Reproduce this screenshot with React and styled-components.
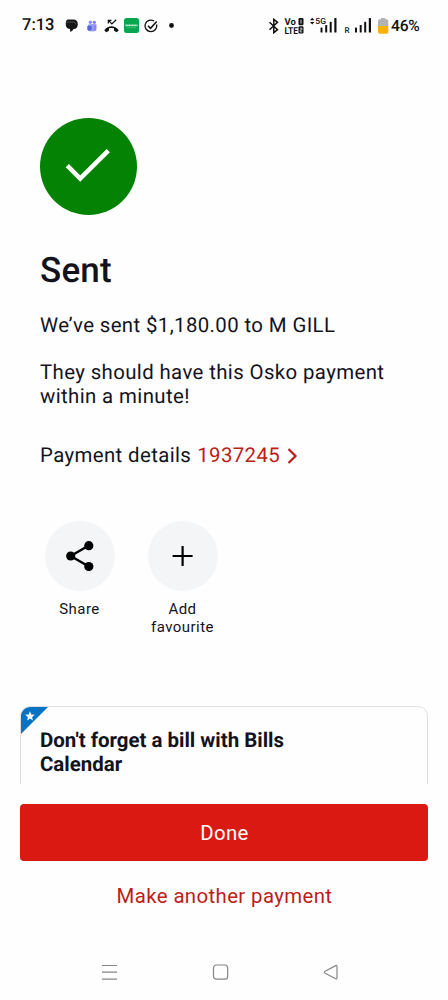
import React from 'react'
import styled, { createGlobalStyle } from 'styled-components'

const GlobalStyle = createGlobalStyle`
  * {
    box-sizing: border-box;
  }

  body {
    margin: 0;
    background: #fefefe;
    color: #13131d;
    font-family: Roboto, 'Liberation Sans', sans-serif;
    text-rendering: geometricPrecision;
  }

  button {
    border: 0;
    padding: 0;
    background: none;
    color: inherit;
    font: inherit;
  }

  svg {
    display: block;
    flex: none;
  }
`

const Screen = styled.div`
  display: flex;
  flex-direction: column;
  width: 448px;
  height: 1000px;
  overflow: hidden;
`

const StatusBar = styled.header`
  display: flex;
  justify-content: space-between;
  height: 51px;
  padding: 0 28px 0 22px;
  color: #111;
`

const StatusGroup = styled.div`
  display: flex;
  align-items: center;
`

const StatusItem = styled.div`
  flex: none;
  width: ${props => props.$width}px;
  margin-left: ${props => props.$gap || 0}px;
`

const Clock = styled.span`
  width: 33px;
  padding-top: 1px;
  font-size: 16.5px;
  font-weight: 500;
  line-height: 20px;
  white-space: nowrap;
`

const Battery = styled.span`
  width: 29px;
  margin-left: 2px;
  font-size: 15.6px;
  font-weight: 500;
  line-height: 20px;
  letter-spacing: -0.2px;
  white-space: nowrap;
`

const SvgLabel = styled.text`
  font-family: Roboto, sans-serif;
  font-size: ${props => props.$size}px;
  font-weight: ${props => props.$weight || 700};
`

const Content = styled.main`
  height: 733px;
  padding: 66px 20px 0;
  overflow: hidden;
`

const Message = styled.section`
  padding: 0 20px;
`

const SuccessBadge = styled.div`
  display: flex;
  align-items: center;
  justify-content: center;
  width: 97px;
  height: 97px;
  margin-top: 0.5px;
  padding: 0 2px 2px 0;
  border-radius: 50%;
  background: #038203;
`

const Title = styled.h1`
  margin: 35px 0 0;
  font-size: 35px;
  font-weight: 500;
  line-height: 42px;
  letter-spacing: 0.2px;
`

const Text = styled.p`
  margin: ${props => props.$top}px 0 0;
  font-size: 20.4px;
  line-height: 23.8px;
  letter-spacing: 0.38px;
  white-space: nowrap;
`

const DetailsRow = styled(Text)`
  display: flex;
  align-items: center;
`

const DetailsLink = styled.a`
  display: flex;
  align-items: center;
  gap: 7px;
  margin-left: 6px;
  color: #bd1d17;
`

const Actions = styled.div`
  display: flex;
  gap: 14px;
  height: 184.3px;
  margin-top: 53.5px;
  padding-left: 15px;
`

const Action = styled.button`
  display: flex;
  flex-direction: column;
  align-items: center;
  width: 89px;
  font-size: 15px;
  line-height: 17.5px;
  letter-spacing: 0.45px;
`

const ActionCircle = styled.span`
  display: flex;
  align-items: center;
  justify-content: center;
  width: 70px;
  height: 70px;
  margin-bottom: 10px;
  border-radius: 50%;
  background: #f3f5f7;
`

const PromoCard = styled.article`
  position: relative;
  height: 120px;
  padding: 21px 19px;
  border: 1px solid #e0e0e1;
  border-radius: 10px;
  overflow: hidden;
`

const PromoTitle = styled.h2`
  width: 280px;
  margin: 0;
  font-size: 20.45px;
  font-weight: 700;
  line-height: 24px;
`

const Ribbon = styled.svg`
  position: absolute;
  top: -1px;
  left: -1px;
`

const Footer = styled.footer`
  display: flex;
  flex-direction: column;
  align-items: center;
  padding: 20px 20px 0;
`

const DoneButton = styled.button`
  width: 100%;
  height: 57px;
  padding: 1px 0 0 1px;
  border-radius: 4px;
  background: #da1912;
  color: #fff;
  font-size: 20.4px;
  letter-spacing: 0.38px;
`

const TextButton = styled.button`
  margin-top: 23px;
  padding-left: 1px;
  color: #bd1d17;
  font-size: 20.4px;
  line-height: 24px;
  letter-spacing: 0.38px;
`

const SystemNav = styled.nav`
  display: flex;
  justify-content: space-between;
  margin-top: 56px;
  padding: 0 109px 0 101px;
`

const ChatIcon = () => (
  <svg width="13" height="13" viewBox="0 0 13 13" fill="#161616">
    <path d="M3.500.5h4.800Q12.800.5 12.800 5.200q0 4.600-4.300 4.800-.7 2-3 2.800-.5.200-.4-.4V10Q1.500 10 .8 6.200.2.500 3.500.5z" />
    <path d="M1.300 3.800q.7-.8 2-.8h5q2 0 2.700 2.500" fill="none" stroke="#6f6f6f" strokeWidth=".6" />
  </svg>
)

const TeamsIcon = () => (
  <svg width="10" height="12" viewBox="0 0 10 12">
    <circle cx="3.400" cy="2.300" r="1.700" fill="#8f8ff0" />
    <circle cx="7.400" cy="2.300" r="1.600" fill="#8378e2" />
    <path d="M4.500 4.300h5v4.200q0 2.700-2.500 2.700H5z" fill="#9a7cf0" />
    <rect x="1" y="4.300" width="6" height="6.900" rx="1.300" fill="#8ba3f6" />
    <rect x=".3" y="5.800" width="4.400" height="4.600" rx=".8" fill="#5c63d2" />
  </svg>
)

const MissedCallIcon = () => (
  <svg width="15" height="14" viewBox="0 0 15 14">
    <path d="M4.300 4.500V1.300h3.200M4.600 1.500l3.300 3.400L12.200.8" fill="none" stroke="#111" strokeWidth="1.200" />
    <path
      d="M.5 10.900Q3.400 7.300 7.500 7.300t7 3.600q.3.400 0 .7l-1.400 1.400q-.4.400-.8.100l-1.900-1.200q-.4-.3-.4-.7V9.300q-2.500-.7-5 0v1.900q0 .4-.4.700l-1.900 1.200q-.4.300-.8-.1L.5 11.600q-.3-.3 0-.7z"
      fill="#111"
    />
  </svg>
)

const BankAppIcon = () => (
  <svg width="15" height="15" viewBox="0 0 15 15">
    <rect width="15" height="15" rx="2.500" fill="#06a650" />
    <path d="M1.500 7.400h12" stroke="#c4f1d7" strokeWidth="1.900" strokeDasharray="1.300 .3" />
    <path d="M3 9.800h9" stroke="#58c588" strokeWidth=".6" />
  </svg>
)

const TaskIcon = () => (
  <svg width="14" height="14" viewBox="0 0 14 14" fill="none" stroke="#111" strokeWidth="1.300">
    <path d="M12.500 5.500A5.800 5.800 0 1 1 10 2" />
    <path d="M4 6.700l2.500 2.600 6.200-6.900" strokeWidth="1.500" />
  </svg>
)

const BluetoothIcon = () => (
  <svg width="11" height="16" viewBox="0 0 11 16" fill="none" stroke="#111" strokeWidth="1.500">
    <path d="M1.500 4.300l8 7.400-3.700 3V1.300l3.700 3-8 7.400" />
  </svg>
)

const VolteIcon = () => (
  <svg width="20" height="18" viewBox="0 0 20 18" fill="#111">
    <SvgLabel x="0.500" y="8" $size="9.500">Vo</SvgLabel>
    <SvgLabel x="0.500" y="16.500" $size="9.500" textLength="13.500" lengthAdjust="spacingAndGlyphs">LTE</SvgLabel>
    <rect x="14.500" y="1" width="5" height="7.200" rx="1.200" />
    <path d="M17 2.600v4" stroke="#fff" strokeWidth=".8" />
    <rect x="14.500" y="9.300" width="5" height="7.200" rx="1.200" />
    <path d="M15.900 11.200h2v1.700h-1.700v2h2" fill="none" stroke="#fff" strokeWidth=".7" />
  </svg>
)

const SignalBars = ({ x }) => (
  <g fill="#111">
    <rect x={x} y="10.500" width="2" height="5" rx=".6" />
    <rect x={x + 4.700} y="8" width="2" height="7.500" rx=".6" />
    <rect x={x + 9.200} y="4.800" width="2" height="10.700" rx=".6" />
    <rect x={x + 13.800} y="1" width="2.200" height="14.500" rx=".6" />
  </g>
)

const FiveGSignal = () => (
  <svg width="27" height="17" viewBox="0 0 27 17" fill="#111">
    <path d="M0 3.300L2.200.8l2.200 2.500zM0 4.900h4.400L2.200 7.400z" />
    <SvgLabel x="5.300" y="7.300" $size="8.500" $weight={500}>5G</SvgLabel>
    <SignalBars x={10.500} />
  </svg>
)

const RoamingSignal = () => (
  <svg width="27" height="17" viewBox="0 0 27 17" fill="#111">
    <SvgLabel x="0.500" y="15.500" $size="8" $weight={500}>R</SvgLabel>
    <SignalBars x={11} />
  </svg>
)

const BatteryIcon = () => (
  <svg width="12" height="16" viewBox="0 0 12 16">
    <path d="M4 0h4.300v1.300h1.300q1.700 0 1.700 1.700v5H1V3q0-1.700 1.700-1.700H4z" fill="#b3b3b5" />
    <path d="M1 8h10.300v6q0 1.700-1.700 1.700H2.700Q1 15.700 1 14z" fill="#fbb003" />
  </svg>
)

const CheckIcon = () => (
  <svg width="45" height="37" viewBox="0 0 45 37" fill="none" stroke="#fff" strokeWidth="4.500">
    <path d="M2.300 18.700L15.200 31.600 43.300 3.600" />
  </svg>
)

const ChevronIcon = () => (
  <svg width="11" height="16" viewBox="0 0 11 16" fill="none" stroke="#bd1d17" strokeWidth="2.200">
    <path d="M1.500 1l7 7-7 7" />
  </svg>
)

const ShareIcon = () => (
  <svg width="28" height="30" viewBox="0 0 28 30">
    <path d="M22.800 4.500L4.700 15l18.100 10.500" fill="none" stroke="#000" strokeWidth="2.400" />
    <circle cx="4.700" cy="15" r="4.600" />
    <circle cx="22.800" cy="4.700" r="4.600" />
    <circle cx="22.800" cy="25.500" r="4.600" />
  </svg>
)

const PlusIcon = () => (
  <svg width="22" height="22" viewBox="0 0 22 22" stroke="#000" strokeWidth="2.200">
    <path d="M10.600 1v20M.6 11h20" />
  </svg>
)

const RecentsIcon = () => (
  <svg width="17" height="17" viewBox="0 0 17 17" stroke="#858585" strokeWidth="1.200">
    <path d="M1 1.500h15M1 8.200h15M1 15.200h15" />
  </svg>
)

const HomeIcon = () => (
  <svg width="17" height="17" viewBox="0 0 17 17" fill="none" stroke="#858585" strokeWidth="1.200">
    <rect x="1.500" y="1" width="14.200" height="14.200" rx="3" />
  </svg>
)

const BackIcon = () => (
  <svg width="17" height="17" viewBox="0 0 17 17" fill="none" stroke="#858585" strokeWidth="1.200">
    <path d="M3.100 7.200L13.700 1.600q1.300-.6 1.300.7v11.800q0 1.300-1.300.7L3.100 9.200q-1.700-1 0-2z" />
  </svg>
)

const PhoneStatus = () => (
  <StatusBar>
    <StatusGroup>
      <Clock>7:13</Clock>
      <StatusItem $width={13} $gap={10}><ChatIcon /></StatusItem>
      <StatusItem $width={10} $gap={9}><TeamsIcon /></StatusItem>
      <StatusItem $width={15} $gap={7}><MissedCallIcon /></StatusItem>
      <StatusItem $width={15} $gap={5}><BankAppIcon /></StatusItem>
      <StatusItem $width={14} $gap={5}><TaskIcon /></StatusItem>
      <StatusItem $width={5} $gap={10.5}>
        <svg width="5" height="5"><circle cx="2.500" cy="2.500" r="2.400" fill="#111" /></svg>
      </StatusItem>
    </StatusGroup>
    <StatusGroup>
      <StatusItem $width={11}><BluetoothIcon /></StatusItem>
      <StatusItem $width={20} $gap={5}><VolteIcon /></StatusItem>
      <StatusItem $width={27} $gap={6}><FiveGSignal /></StatusItem>
      <StatusItem $width={27} $gap={7}><RoamingSignal /></StatusItem>
      <StatusItem $width={12} $gap={6}><BatteryIcon /></StatusItem>
      <Battery>46%</Battery>
    </StatusGroup>
  </StatusBar>
)

const App = () => (
  <Screen>
    <GlobalStyle />
    <PhoneStatus />
    <Content>
      <Message>
        <SuccessBadge>
          <CheckIcon />
        </SuccessBadge>
        <Title>Sent</Title>
        <Text $top={22}>We’ve sent $1,180.00 to M GILL</Text>
        <Text $top={23.7}>
          They should have this Osko payment
          <br />
          within a minute!
        </Text>
        <DetailsRow $top={35.4}>
          Payment details
          <DetailsLink>
            1937245
            <ChevronIcon />
          </DetailsLink>
        </DetailsRow>
      </Message>
      <Actions>
        <Action>
          <ActionCircle><ShareIcon /></ActionCircle>
          Share
        </Action>
        <Action>
          <ActionCircle><PlusIcon /></ActionCircle>
          Add favourite
        </Action>
      </Actions>
      <PromoCard>
        <Ribbon width="30" height="30" viewBox="0 0 30 30">
          <path d="M0 29V10Q0 0 10 0h19z" fill="#0873c4" />
          <path d="M10 5.200l1.300 3.200 3.500.3-2.700 2.300.8 3.400-2.900-1.800-2.900 1.800.8-3.400-2.700-2.300 3.500-.3z" fill="#fff" />
        </Ribbon>
        <PromoTitle>Don't forget a bill with Bills Calendar</PromoTitle>
      </PromoCard>
    </Content>
    <Footer>
      <DoneButton>Done</DoneButton>
      <TextButton>Make another payment</TextButton>
    </Footer>
    <SystemNav>
      <RecentsIcon />
      <HomeIcon />
      <BackIcon />
    </SystemNav>
  </Screen>
)

export default App
